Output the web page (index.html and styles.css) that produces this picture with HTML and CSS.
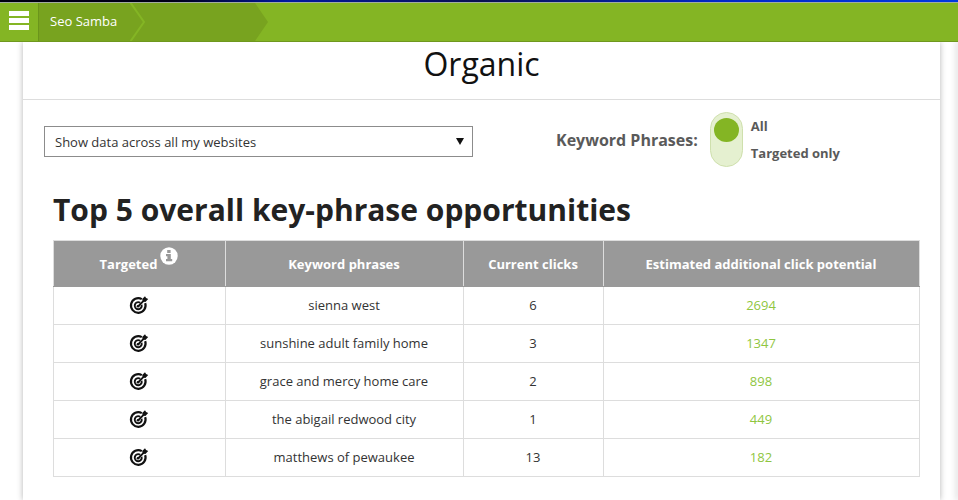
FILE: index.html
```html
<!DOCTYPE html>
<html lang="en">
<head>
<meta charset="utf-8">
<title>Organic</title>
<link rel="stylesheet" href="styles.css">
</head>
<body>
<svg class="symbols" aria-hidden="true">
  <symbol id="target" viewBox="0 0 20 20">
    <path d="M12.8 4.1A7.3 7.3 0 1 0 16.2 8.2" fill="none" stroke="currentColor" stroke-width="2.2"/>
    <path d="M11.2 7.8A3.5 3.5 0 1 0 12.6 9.8" fill="none" stroke="currentColor" stroke-width="1.9"/>
    <path d="M9 11.5L15.5 4.8" fill="none" stroke="currentColor" stroke-width="1.8"/>
    <path d="M13.2 3.9L16 1.2L17.1 2.9L19.2 3.9L16.4 6.9L13.8 6.5Z" fill="currentColor"/>
    <circle cx="9" cy="11.3" r="1.3" fill="currentColor"/>
  </symbol>
</svg>
<header class="topbar">
  <button class="menu" type="button" aria-label="Menu"><span></span><span></span><span></span></button>
  <nav class="crumbs">
    <a class="crumb" href="#">Seo Samba</a>
    <svg class="chevron" viewBox="0 0 16 38" aria-hidden="true"><path class="fill" d="M0 0H16V38H0Z"/><path class="line" d="M0 -1L14 19L0 39"/></svg>
    <span class="crumb-next"></span>
    <svg class="tip" viewBox="0 0 13 38" aria-hidden="true"><path class="fill" d="M0 0L13 19L0 38Z"/></svg>
  </nav>
</header>
<div class="page">
  <main class="card">
    <h1>Organic</h1>
    <div class="filters">
      <div class="picker">
        <select aria-label="Websites"><option>Show data across all my websites</option></select>
        <svg viewBox="0 0 8 7" aria-hidden="true"><path d="M0 0H8L4 7Z"/></svg>
      </div>
      <div class="phrases" role="radiogroup" aria-labelledby="phrases-title">
        <span class="phrases-title" id="phrases-title">Keyword Phrases:</span>
        <div class="track">
          <input type="radio" name="phrases" id="all" checked>
          <input type="radio" name="phrases" id="targeted">
        </div>
        <div class="options">
          <label for="all">All</label>
          <label for="targeted">Targeted only</label>
        </div>
      </div>
    </div>
    <section class="report">
      <h2>Top 5 overall key-phrase opportunities</h2>
      <table>
        <colgroup><col class="c1"><col class="c2"><col class="c3"><col></colgroup>
        <thead>
          <tr>
            <th><span class="with-info">Targeted <svg class="info" viewBox="0 0 18 18" aria-hidden="true"><circle cx="9" cy="9" r="8.7"/><path d="M7.2 3H10.6V5.9H7.2ZM6 7.1H10.8V12H12.2V14.2H6V12H7.4V9.2H6Z"/></svg></span></th>
            <th>Keyword phrases</th><th>Current clicks</th><th>Estimated additional click potential</th>
          </tr>
        </thead>
        <tbody>
          <tr><td><svg class="target"><use href="#target"/></svg></td><td>sienna west</td><td>6</td><td class="potential">2694</td></tr>
          <tr><td><svg class="target"><use href="#target"/></svg></td><td>sunshine adult family home</td><td>3</td><td class="potential">1347</td></tr>
          <tr><td><svg class="target"><use href="#target"/></svg></td><td>grace and mercy home care</td><td>2</td><td class="potential">898</td></tr>
          <tr><td><svg class="target"><use href="#target"/></svg></td><td>the abigail redwood city</td><td>1</td><td class="potential">449</td></tr>
          <tr><td><svg class="target"><use href="#target"/></svg></td><td>matthews of pewaukee</td><td>13</td><td class="potential">182</td></tr>
        </tbody>
      </table>
    </section>
  </main>
  <div class="next-panel"></div>
</div>
</body>
</html>
```
FILE: styles.css
```css
* { box-sizing: border-box; }
html { height: 100%; }
body {
  margin: 0;
  height: 100%;
  display: flex;
  flex-direction: column;
  overflow: hidden;
  background: #fff;
  color: #333;
  font: 13px/20px "Open Sans", sans-serif;
}
.symbols { position: absolute; width: 0; height: 0; }

.topbar {
  position: relative;
  z-index: 1;
  flex: none;
  display: flex;
  height: 42px;
  padding-top: 3px;
  background: linear-gradient(#a3ada0, #a3ada0) 0 2px / 100% 1px no-repeat,
    linear-gradient(90deg, #000010 0%, #000018 18%, #0018a0 30%, #0a1050 50%, #0028c8 75%, #0038e0 100%) 0 0 / 100% 2px no-repeat,
    #84b524;
  border-bottom: 1px solid #6f981e;
}
.menu {
  display: flex;
  flex-direction: column;
  gap: 2px;
  width: 38px;
  padding: 8px 9px;
  border: 0;
  background: none;
}
.menu span { width: 20px; height: 5px; flex: none; background: #fff; }
.crumbs { display: flex; }
.crumb {
  padding: 0 13px 0 11px;
  border-left: 1px solid #6b951b;
  background: #78a31f;
  color: #fff;
  line-height: 36px;
  text-decoration: none;
}
.crumb-next { width: 109px; background: #78a31f; }
.chevron { width: 16px; height: 38px; }
.tip { width: 13px; height: 38px; }
.fill { fill: #78a31f; }
.line { fill: none; stroke: #84b524; stroke-width: 2; }

.page { flex: 1; display: flex; gap: 18px; padding-left: 23px; }
.card {
  flex: 1;
  background: #fff;
  box-shadow: 0 0 6px rgba(0, 0, 0, .3);
}
.next-panel { width: 0; box-shadow: 0 0 6px 1px rgba(0, 0, 0, .3); }
h1 {
  margin: 0;
  padding-bottom: 13px;
  border-bottom: 1px solid #ddd;
  color: #111;
  font-size: 32px;
  font-weight: 400;
  line-height: 44px;
  text-align: center;
}
.filters {
  display: flex;
  align-items: center;
  padding: 12px 21px 0;
}
.picker { position: relative; width: 429px; margin-top: 4px; }
.picker select {
  display: block;
  width: 100%;
  height: 31px;
  padding: 0 10px;
  border: 1px solid #8c8c8c;
  border-radius: 0;
  appearance: none;
  background: #fff;
  color: #333;
  font: inherit;
}
.picker svg {
  position: absolute;
  top: 12px;
  right: 9px;
  width: 8px;
  height: 7px;
  fill: #111;
  pointer-events: none;
}
.phrases {
  display: flex;
  align-items: center;
  margin-left: 83px;
  color: #5a5a5a;
  font-weight: 700;
}
.phrases-title { margin-right: 12px; font-size: 16px; }
.track {
  display: flex;
  flex-direction: column;
  align-items: center;
  width: 33px;
  height: 55px;
  padding-top: 5px;
  border: 1px solid #cfe0ad;
  border-radius: 17px;
  background: #e5f0d0;
}
.track input { width: 25px; height: 24px; margin: 0; border-radius: 50%; appearance: none; }
.track input:checked { background: #84b524; }
.options { display: flex; flex-direction: column; gap: 7px; margin-left: 8px; }

.report { padding: 23px 20px 0 30px; }
h2 {
  margin: 0 0 10px;
  color: #222;
  font-size: 30px;
  font-weight: 700;
  line-height: 40px;
}
table { width: 100%; border-collapse: collapse; table-layout: fixed; }
.c1 { width: 172px; }
.c2 { width: 238px; }
.c3 { width: 140px; }
th, td { padding: 0 1px 0 0; border: 1px solid #ddd; text-align: center; }
th { height: 46px; padding-top: 1px; background: #999; color: #fff; font-weight: 700; border-bottom-color: #999; }
td { height: 38px; padding-bottom: 2px; }
.with-info { position: relative; padding-right: 21px; }
.info { position: absolute; top: -8px; right: 0; width: 18px; height: 18px; }
.info circle { fill: #fff; }
.info path { fill: #999; }
.target { display: block; width: 20px; height: 20px; margin: 0 auto; color: #111; }
.potential { color: #8fc63f; }
```
